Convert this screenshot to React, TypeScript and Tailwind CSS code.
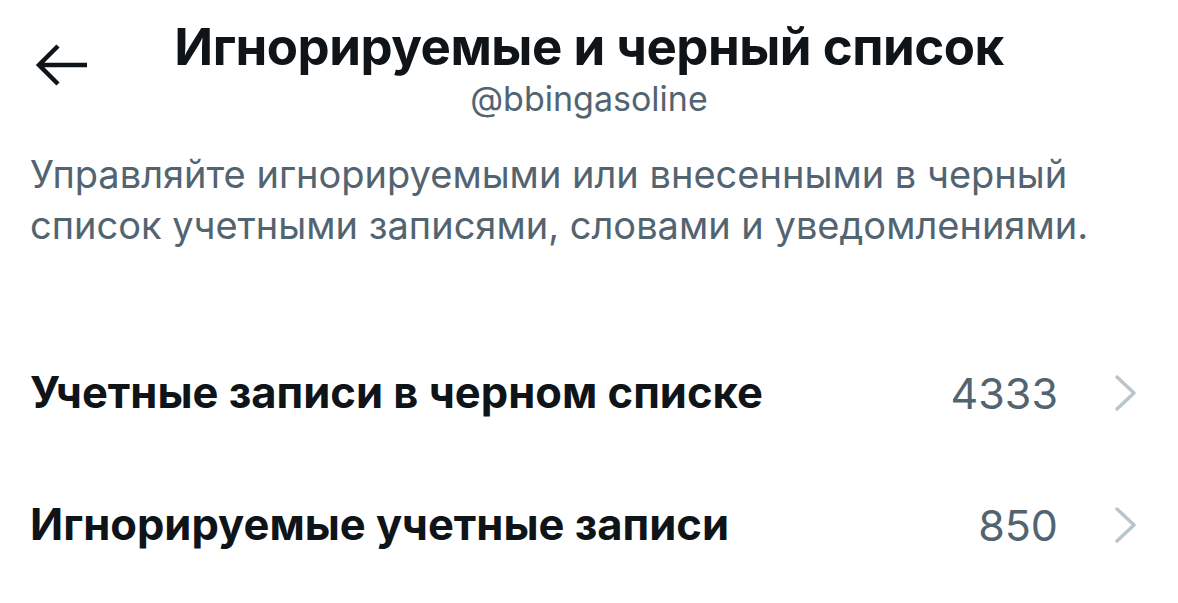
import React from "react";

const font = { fontFamily: '"Inter", "Roboto", "Noto Sans", sans-serif' };

function Chevron() {
  return (
    <svg width="24" height="38" viewBox="0 0 24 38" fill="none" className="text-[#b9c5cc]">
      <path d="M3 3 L20 19 L3 35" stroke="currentColor" strokeWidth="3.5" strokeLinecap="round" strokeLinejoin="round" />
    </svg>
  );
}

function Row({ label, count }: { label: string; count: string }) {
  return (
    <div className="flex items-center h-[132px] pl-[30px] pr-[40px]">
      <div className="flex-1 text-[43.5px] font-bold text-[#0f1419]">{label}</div>
      <div className="text-[43px] text-[#536471] mr-[56px]">{count}</div>
      <Chevron />
    </div>
  );
}

export default function App() {
  return (
    <div className="w-[1178px] h-[603px] bg-white overflow-hidden" style={font}>
      <div className="relative flex flex-col items-center pt-[16px]">
        <button className="absolute left-[34px] top-[41px] text-[#0f1419]">
          <svg width="56" height="48" viewBox="0 0 56 48" fill="none">
            <path d="M53 24 H6 M24 5 L5 24 L24 43" stroke="currentColor" strokeWidth="4.5" strokeLinejoin="miter" />
          </svg>
        </button>
        <h1 className="text-[51px] font-bold leading-[62px] tracking-[-0.5px] text-[#0f1419]">
          Игнорируемые и черный список
        </h1>
        <div className="text-[34px] leading-[42px] text-[#536471]">@bbingasoline</div>
      </div>
      <p className="px-[30px] pt-[29px] text-[38px] leading-[51px] text-[#536471]">
        Управляйте игнорируемыми или внесенными в черный список учетными записями, словами и уведомлениями.
      </p>
      <div className="pt-[76px]">
        <Row label="Учетные записи в черном списке" count="4333" />
        <Row label="Игнорируемые учетные записи" count="850" />
      </div>
    </div>
  );
}
